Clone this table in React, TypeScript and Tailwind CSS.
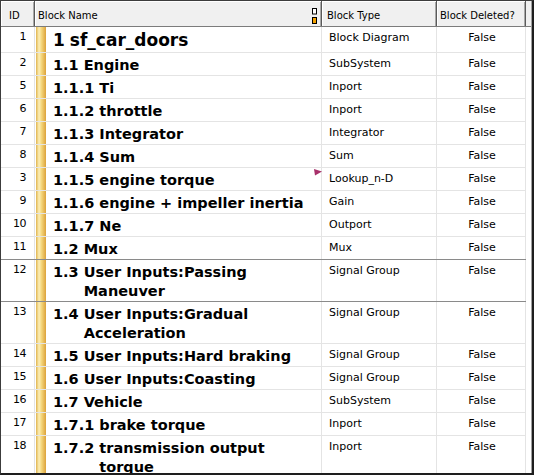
import React from "react";

type R = {
  id: string;
  num: string;
  name: string;
  type: string;
  title?: boolean;
  dark?: boolean;
  marker?: boolean;
};

const rows: R[] = [
  { id: "1", num: "1", name: "sf_car_doors", type: "Block Diagram", title: true },
  { id: "2", num: "1.1", name: "Engine", type: "SubSystem" },
  { id: "5", num: "1.1.1", name: "Ti", type: "Inport" },
  { id: "6", num: "1.1.2", name: "throttle", type: "Inport" },
  { id: "7", num: "1.1.3", name: "Integrator", type: "Integrator" },
  { id: "8", num: "1.1.4", name: "Sum", type: "Sum" },
  { id: "3", num: "1.1.5", name: "engine torque", type: "Lookup_n-D", marker: true },
  { id: "9", num: "1.1.6", name: "engine + impeller inertia", type: "Gain" },
  { id: "10", num: "1.1.7", name: "Ne", type: "Outport" },
  { id: "11", num: "1.2", name: "Mux", type: "Mux", dark: true },
  { id: "12", num: "1.3", name: "User Inputs:Passing Maneuver", type: "Signal Group", dark: true },
  { id: "13", num: "1.4", name: "User Inputs:Gradual Acceleration", type: "Signal Group" },
  { id: "14", num: "1.5", name: "User Inputs:Hard braking", type: "Signal Group" },
  { id: "15", num: "1.6", name: "User Inputs:Coasting", type: "Signal Group" },
  { id: "16", num: "1.7", name: "Vehicle", type: "SubSystem" },
  { id: "17", num: "1.7.1", name: "brake torque", type: "Inport" },
  { id: "18", num: "1.7.2", name: "transmission output torque", type: "Inport" },
];

function Row({ r }: { r: R }) {
  return (
    <div
      className={`flex shrink-0 border-b ${r.dark ? "border-[#8a8a8a]" : "border-[#e4e4e4]"} ${r.title ? "min-h-[26px]" : "min-h-[22px]"}`}
    >
      <div className="w-[34px] shrink-0 border-r border-[#e4e4e4] text-right pr-[8px] text-[11px] leading-[14px] tracking-[-0.5px] pt-[3px]">
        {r.id}
      </div>
      <div className="w-[287px] shrink-0 border-r border-[#e4e4e4] flex relative">
        <div className="w-[10px] ml-[1px] shrink-0 bg-[linear-gradient(to_right,#e0b44e,#fcefb8_30%,#f4d67c_55%,#dca23a)]" />
        <div
          className={`flex ml-[7px] pr-[8px] font-bold ${r.title ? "text-[17px] leading-[22px] pt-[2px]" : "text-[14.5px] leading-[19px] pt-[3px]"}`}
        >
          <span className="shrink-0 whitespace-nowrap">{r.num}</span>
          <span className="ml-[5px]">{r.name}</span>
        </div>
        {r.marker && (
          <svg
            className="absolute left-[279px] top-[1px]"
            width="8"
            height="7"
            viewBox="0 0 8 7"
          >
            <polygon points="0,0 8,2.5 1,6.5" fill="#a8306a" />
          </svg>
        )}
      </div>
      <div className="w-[115px] shrink-0 border-r border-[#e4e4e4] pl-[7px] text-[11px] leading-[14px] pt-[4px]">
        {r.type}
      </div>
      <div className="w-[89px] shrink-0 border-r border-[#e4e4e4] text-center pl-[2px] text-[11px] leading-[14px] pt-[4px]">
        False
      </div>
    </div>
  );
}

export default function App() {
  return (
    <div className="w-[534px] h-[475px] overflow-hidden bg-white font-['DejaVu_Sans',sans-serif] text-black border-t border-l border-t-[#3c3c3c] border-l-[#3c3c3c] border-r-2 border-b-2 border-r-[#1e1e1e] border-b-[#1e1e1e] flex">
      <div className="w-[525px] shrink-0 flex flex-col">
        <div className="flex h-[26px] shrink-0 bg-[#f0f0f0] border-b border-[#7c7c7c] text-[10px] leading-[12px]">
          <div className="w-[34px] shrink-0 pl-[8px] pt-[9px] border-r border-[#5a5a5a] shadow-[inset_1px_1px_0_#ffffff,inset_-1px_0_0_#a8a8a8]">
            ID
          </div>
          <div className="w-[287px] shrink-0 pl-[3px] pt-[9px] pr-[4px] flex justify-between border-r border-[#5a5a5a] shadow-[inset_1px_1px_0_#ffffff,inset_-1px_0_0_#a8a8a8]">
            <span>Block Name</span>
            <svg width="5" height="16" viewBox="0 0 5 16" className="-mt-[2px]">
              <rect x="0.5" y="0.5" width="4" height="5.5" fill="#ffffff" stroke="#000" strokeWidth="1" />
              <rect x="0.5" y="9.5" width="4" height="6" fill="#f2a100" stroke="#000" strokeWidth="1" />
            </svg>
          </div>
          <div className="w-[115px] shrink-0 pl-[5px] pt-[9px] border-r border-[#5a5a5a] shadow-[inset_1px_1px_0_#ffffff,inset_-1px_0_0_#a8a8a8]">
            Block Type
          </div>
          <div className="w-[89px] shrink-0 pl-[3px] pt-[9px] border-r border-[#5a5a5a] shadow-[inset_1px_1px_0_#ffffff,inset_-1px_0_0_#a8a8a8]">
            Block Deleted?
          </div>
        </div>
        {rows.map((r) => (
          <Row key={r.id} r={r} />
        ))}
      </div>
      <div className="flex-1 flex flex-col border-r border-[#a0a0a0]">
        <div className="h-[26px] shrink-0 bg-[#f0f0f0] border-b border-[#7c7c7c]" />
        <div className="flex-1 bg-white" />
      </div>
    </div>
  );
}
